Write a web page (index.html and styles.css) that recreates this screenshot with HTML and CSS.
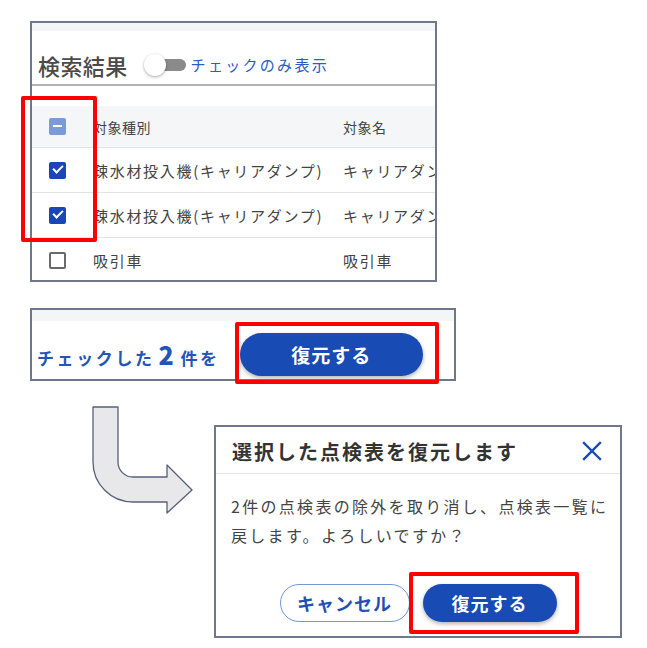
FILE: index.html
```html
<!DOCTYPE html>
<html lang="ja">
<head>
    <meta charset="UTF-8">
    <meta name="viewport" content="width=device-width, initial-scale=1.0">
    <title>点検表の復元</title>
    <link rel="stylesheet" href="styles.css">
</head>
<body>
    <div class="page">
        <div class="results">
            <div class="strip"></div>
            <div class="results-head">
                <span class="results-title">検索結果</span>
                <span class="toggle"><span class="toggle-knob"></span></span>
                <span class="toggle-label">チェックのみ表示</span>
            </div>
            <div class="spacer"></div>
            <div class="table-row table-header">
                <div class="cell-check"><span class="checkbox partial"></span></div>
                <div class="cell">対象種別</div>
                <div class="cell">対象名</div>
            </div>
            <div class="table-row">
                <div class="cell-check"><span class="checkbox checked"></span></div>
                <div class="cell">疎水材投入機(キャリアダンプ)</div>
                <div class="cell">キャリアダンプ</div>
            </div>
            <div class="table-row">
                <div class="cell-check"><span class="checkbox checked"></span></div>
                <div class="cell">疎水材投入機(キャリアダンプ)</div>
                <div class="cell">キャリアダンプ</div>
            </div>
            <div class="table-row last">
                <div class="cell-check"><span class="checkbox"></span></div>
                <div class="cell">吸引車</div>
                <div class="cell">吸引車</div>
            </div>
            <div class="highlight hl-checks"></div>
        </div>

        <div class="bulk">
            <div class="strip tall"></div>
            <div class="bulk-row">
                <span class="bulk-text">チェックした<b class="bulk-count">2</b>件を</span>
                <button class="btn-primary big">復元する</button>
            </div>
            <div class="highlight hl-bulk"></div>
        </div>

        <div class="bottom">
            <svg class="arrow" width="184" height="120" viewBox="0 0 184 120">
                <path d="M63 1 H88 V56 A15 15 0 0 0 103 71 H137 V59 L162 84 L137 107 V96 H103 A40 40 0 0 1 63 56 Z"
                      fill="#e8e8ea" stroke="#56607a" stroke-width="1.3" stroke-linejoin="round"/>
            </svg>

            <div class="dialog">
                <div class="dialog-head">
                    <span class="dialog-title">選択した点検表を復元します</span>
                    <svg class="dialog-close" width="20" height="20" viewBox="0 0 20 20">
                        <path d="M2 2 L18 18 M18 2 L2 18" stroke="#1a4bb5" stroke-width="2.4" stroke-linecap="square"/>
                    </svg>
                </div>
                <div class="dialog-body">
                    2件の点検表の除外を取り消し、点検表一覧に<br>戻します。よろしいですか？
                </div>
                <div class="dialog-actions">
                    <button class="btn-outline">キャンセル</button>
                    <button class="btn-primary">復元する</button>
                </div>
                <div class="highlight hl-dialog"></div>
            </div>
        </div>
    </div>
</body>
</html>
```

FILE: styles.css
```css
body {
    margin: 0;
    background-color: white;
    font-family: "Noto Sans CJK JP", "Noto Sans", sans-serif;
    color: #444;
}

.page {
    padding: 21px 0 0 30px;
}

.strip {
    height: 8px;
    background-color: #f4f5f7;
}

.strip.tall {
    height: 11px;
}

/* search results panel */
.results {
    position: relative;
    width: 407px;
    height: 261px;
    box-sizing: border-box;
    border: 2px solid #6f788b;
}

.results-head {
    display: flex;
    align-items: center;
    height: 55px;
    padding: 14px 0 0 6px;
    box-sizing: border-box;
    border-bottom: 2px solid #b3b3b3;
}

.results-title {
    font-size: 22px;
    font-weight: 500;
    color: #4a4a4a;
    letter-spacing: 0.4px;
}

.toggle {
    position: relative;
    width: 35px;
    height: 12px;
    margin-left: 23px;
    border-radius: 6px;
    background-color: #8a8a8a;
}

.toggle-knob {
    position: absolute;
    left: -7px;
    top: -5px;
    width: 22px;
    height: 22px;
    border-radius: 50%;
    background-color: white;
    box-shadow: 0 1px 3px rgba(0, 0, 0, 0.35);
}

.toggle-label {
    margin-left: 5px;
    font-size: 15px;
    letter-spacing: 2.3px;
    color: #2a5cc2;
}

.spacer {
    height: 20px;
}

.table-row {
    display: grid;
    grid-template-columns: 61px 250px 1fr;
    align-items: center;
    height: 44px;
    border-bottom: 1px solid #e2e2e2;
    font-size: 15px;
    letter-spacing: 1.7px;
    color: #444;
}

.table-row.last {
    border-bottom: none;
}

.table-header {
    height: 41px;
    background-color: #f5f6f8;
    font-size: 14px;
    letter-spacing: 0.5px;
}

.cell {
    white-space: nowrap;
    overflow: hidden;
}

.cell-check {
    display: flex;
    padding-left: 17px;
}

.checkbox {
    position: relative;
    width: 17px;
    height: 17px;
    box-sizing: border-box;
    border: 2px solid #6a6a6a;
    border-radius: 2px;
}

.checkbox.checked {
    border: none;
    background-color: #1a47b5;
}

.checkbox.checked::after {
    content: "";
    position: absolute;
    left: 4px;
    top: 3px;
    width: 8px;
    height: 4px;
    border-left: 2px solid white;
    border-bottom: 2px solid white;
    transform: rotate(-45deg);
}

.checkbox.partial {
    border: none;
    background-color: #7b9ad8;
}

.checkbox.partial::after {
    content: "";
    position: absolute;
    left: 4px;
    top: 7px;
    width: 9px;
    height: 2px;
    background-color: white;
}

/* bulk action bar */
.bulk {
    position: relative;
    width: 426px;
    height: 73px;
    margin-top: 26px;
    box-sizing: border-box;
    border: 2px solid #6f788b;
}

.bulk-row {
    display: flex;
    align-items: center;
    height: 58px;
    padding: 8px 0 0 5px;
    box-sizing: border-box;
}

.bulk-text {
    font-size: 17px;
    font-weight: bold;
    letter-spacing: 2.6px;
    color: #1f56b8;
}

.bulk-count {
    font-size: 25px;
    margin: 0 4px 0 4px;
}

.btn-primary {
    height: 38px;
    width: 134px;
    border: none;
    border-radius: 19px;
    background-color: #184bb3;
    color: white;
    font-family: inherit;
    font-size: 18px;
    font-weight: bold;
    letter-spacing: 1px;
    box-shadow: 0 2px 4px rgba(0, 0, 0, 0.3);
}

.btn-primary.big {
    width: 183px;
    height: 43px;
    margin-left: 20px;
    border-radius: 22px;
    font-size: 19px;
}

.btn-outline {
    height: 38px;
    width: 130px;
    border: 1.5px solid #7296da;
    border-radius: 19px;
    background-color: white;
    color: #1f50b4;
    font-family: inherit;
    font-size: 18px;
    font-weight: bold;
    letter-spacing: 1px;
}

/* arrow + dialog */
.bottom {
    display: flex;
    align-items: flex-start;
    margin-top: 25px;
}

.arrow {
    display: block;
}

.dialog {
    position: relative;
    width: 408px;
    height: 213px;
    margin-top: 19px;
    box-sizing: border-box;
    border: 2px solid #6f788b;
}

.dialog-head {
    display: flex;
    align-items: center;
    justify-content: space-between;
    height: 47px;
    padding: 2px 18px 0 16px;
    box-sizing: border-box;
    border-bottom: 1px solid #e6e6e6;
}

.dialog-title {
    font-size: 20px;
    font-weight: bold;
    letter-spacing: 2px;
    color: #333;
}

.dialog-body {
    padding: 18px 0 0 15px;
    font-size: 16px;
    line-height: 29px;
    letter-spacing: 2.3px;
    color: #444;
}

.dialog-actions {
    display: flex;
    justify-content: center;
    gap: 13px;
    margin-top: 34px;
}

/* red annotation boxes */
.highlight {
    position: absolute;
    border: 4px solid #ff0000;
    border-radius: 2px;
    box-sizing: border-box;
}

.hl-checks {
    left: -11px;
    top: 73px;
    width: 76px;
    height: 146px;
}

.hl-bulk {
    left: 203px;
    top: 12px;
    width: 204px;
    height: 62px;
}

.hl-dialog {
    left: 193px;
    top: 145px;
    width: 170px;
    height: 62px;
}
```
